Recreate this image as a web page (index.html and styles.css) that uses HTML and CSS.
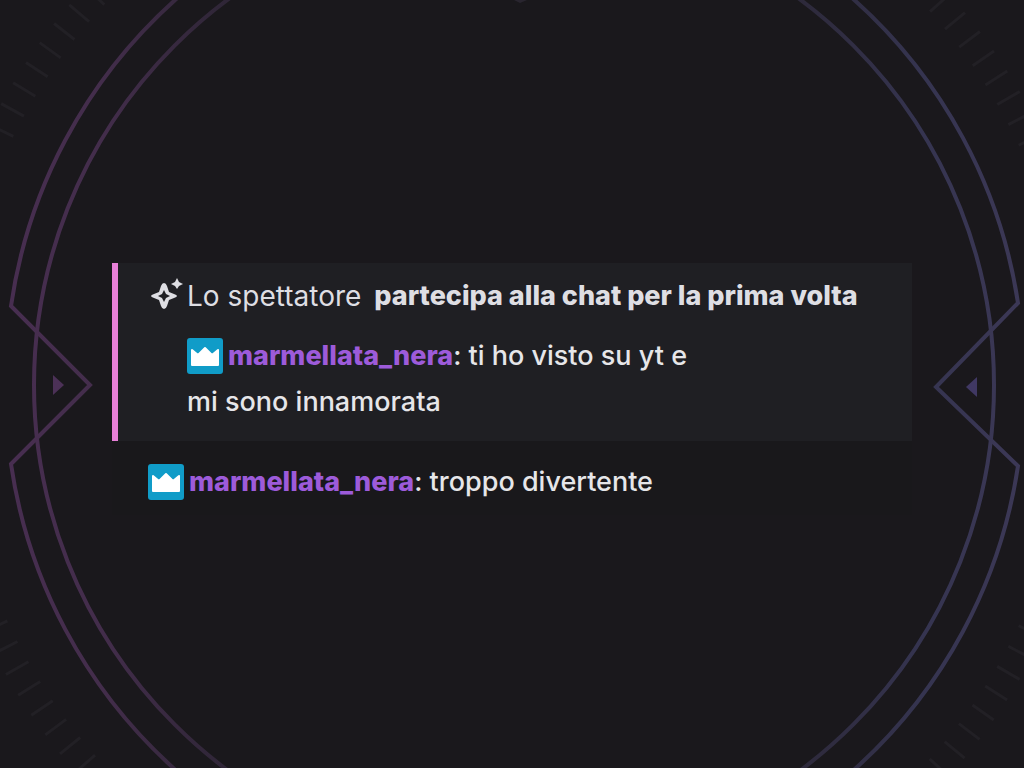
FILE: index.html
```
<!DOCTYPE html>
<html lang="it">
<head>
    <meta charset="utf-8">
    <meta name="viewport" content="width=device-width, initial-scale=1">
    <title>Chat</title>
    <link rel="stylesheet" href="styles.css">
</head>
<body>
    <svg class="backdrop" viewBox="0 0 1024 768" preserveAspectRatio="xMidYMid slice" aria-hidden="true">
        <defs>
            <linearGradient id="ring" gradientUnits="userSpaceOnUse" x1="0" y1="0" x2="1024" y2="0">
                <stop offset="0" stop-color="#482e51"/>
                <stop offset="0.1" stop-color="#432d4b"/>
                <stop offset="0.22" stop-color="#2f2637"/>
                <stop offset="0.78" stop-color="#2d293a"/>
                <stop offset="0.9" stop-color="#353450"/>
                <stop offset="1" stop-color="#3c3856"/>
            </linearGradient>
        </defs>
        <!-- tick marks in the corners -->
        <g class="ticks">
            <path d="M1 132A572 572 0 0 1 146 -53"/>
            <path d="M-5 625A572 572 0 0 0 146 823"/>
            <path d="M1031 141A572 572 0 0 0 882 -53"/>
            <path d="M1031 630A572 572 0 0 1 882 823"/>
        </g>
        <!-- double ring with the side notches -->
        <g class="ring" stroke="url(#ring)">
            <circle cx="514" cy="385" r="480"/>
            <path d="M11 306A509 509 0 0 1 1018 303L936 387L1018 466A509 509 0 0 1 11 464L90 385Z"/>
        </g>
        <path fill="#4c3157" d="M53 375L64 385L53 395Z"/>
        <path fill="#403863" d="M977 377L966 387L977 397Z"/>
        <path fill="#29252f" d="M514 0H527L520 3Z"/>
    </svg>

    <svg class="defs" aria-hidden="true">
        <symbol id="crown" viewBox="0 0 36 36">
            <rect width="36" height="36" rx="3" fill="#109cc8"/>
            <path fill="#fff" stroke="#fff" stroke-width="2" stroke-linejoin="round" d="M5 12L11 17L18 10L25 17L31 12V27H5Z"/>
        </symbol>
    </svg>

    <main class="chat">
        <section class="first-message">
            <div class="notice">
                <svg class="sparkle" viewBox="0 0 32 32" aria-hidden="true">
                    <path fill="#dedee3" fill-rule="evenodd" d="M13 3Q15 3 16 6L18 12L23 14Q26 15 26 16Q26 17 23 18L18 20L16 26Q15 29 13 29Q11 29 10 26L8 20L3 18Q0 17 0 16Q0 15 3 14L8 12L10 6Q11 3 13 3ZM13 10L11 14L7 16L11 18L13 22L15 18L19 16L15 14Z"/>
                    <path fill="#dedee3" d="M26 -2L28 2L32 4L28 6L26 9L24 6L20 4L24 2Z"/>
                </svg>
                <span class="viewer">Lo spettatore</span>
                <strong>partecipa alla chat per la prima volta</strong>
            </div>
            <p class="message">
                <svg class="badge" role="img" aria-label="Prime"><use href="#crown"/></svg><span class="user">marmellata_nera</span>: ti ho visto su yt e<br>mi sono innamorata
            </p>
        </section>
        <p class="message second">
            <svg class="badge" role="img" aria-label="Prime"><use href="#crown"/></svg><span class="user">marmellata_nera</span>: troppo divertente
        </p>
    </main>
</body>
</html>
```
FILE: styles.css
```
html, body {
    min-height: 100%;
}

body {
    margin: 0;
    background: #1a181c;
    color: #e6e6e9;
    font-family: Inter, "Liberation Sans", sans-serif;
    font-size: 27px;
    font-weight: 500;
    line-height: 46px;
}

.backdrop {
    position: fixed;
    top: 0;
    left: 0;
    width: 100%;
    height: 100%;
    z-index: -1;
}

.ring {
    fill: none;
    stroke-width: 4;
}

.ticks {
    fill: none;
    stroke: #222025;
    stroke-width: 26;
    stroke-dasharray: 3 20.500;
}

.defs {
    display: none;
}

.chat {
    margin: 263px 112px 0;
    background: #19181b;
}

/* highlighted box for a viewer's first message */
.first-message {
    padding: 10px 24px 16px 33px;
    border-left: 6px solid #e880d8;
    background: #1f1f23;
}

.notice {
    display: flex;
    align-items: center;
    gap: 4px;
    color: #dedee3;
}

.notice strong {
    font-weight: 800;
}

.sparkle {
    flex: none;
    width: 32px;
    height: 32px;
    overflow: visible;
}

.viewer {
    margin-right: 9px;
    font-size: 28px;
    font-weight: 400;
}

.message {
    margin: 0;
}

.first-message .message {
    padding: 14px 0 0 36px;
}

.second {
    padding: 18px 36px 10px;
}

.badge {
    width: 36px;
    height: 36px;
    margin: 0 5px 4px 0;
    vertical-align: middle;
}

.user {
    color: #9d5bda;
    font-weight: 800;
}
```
